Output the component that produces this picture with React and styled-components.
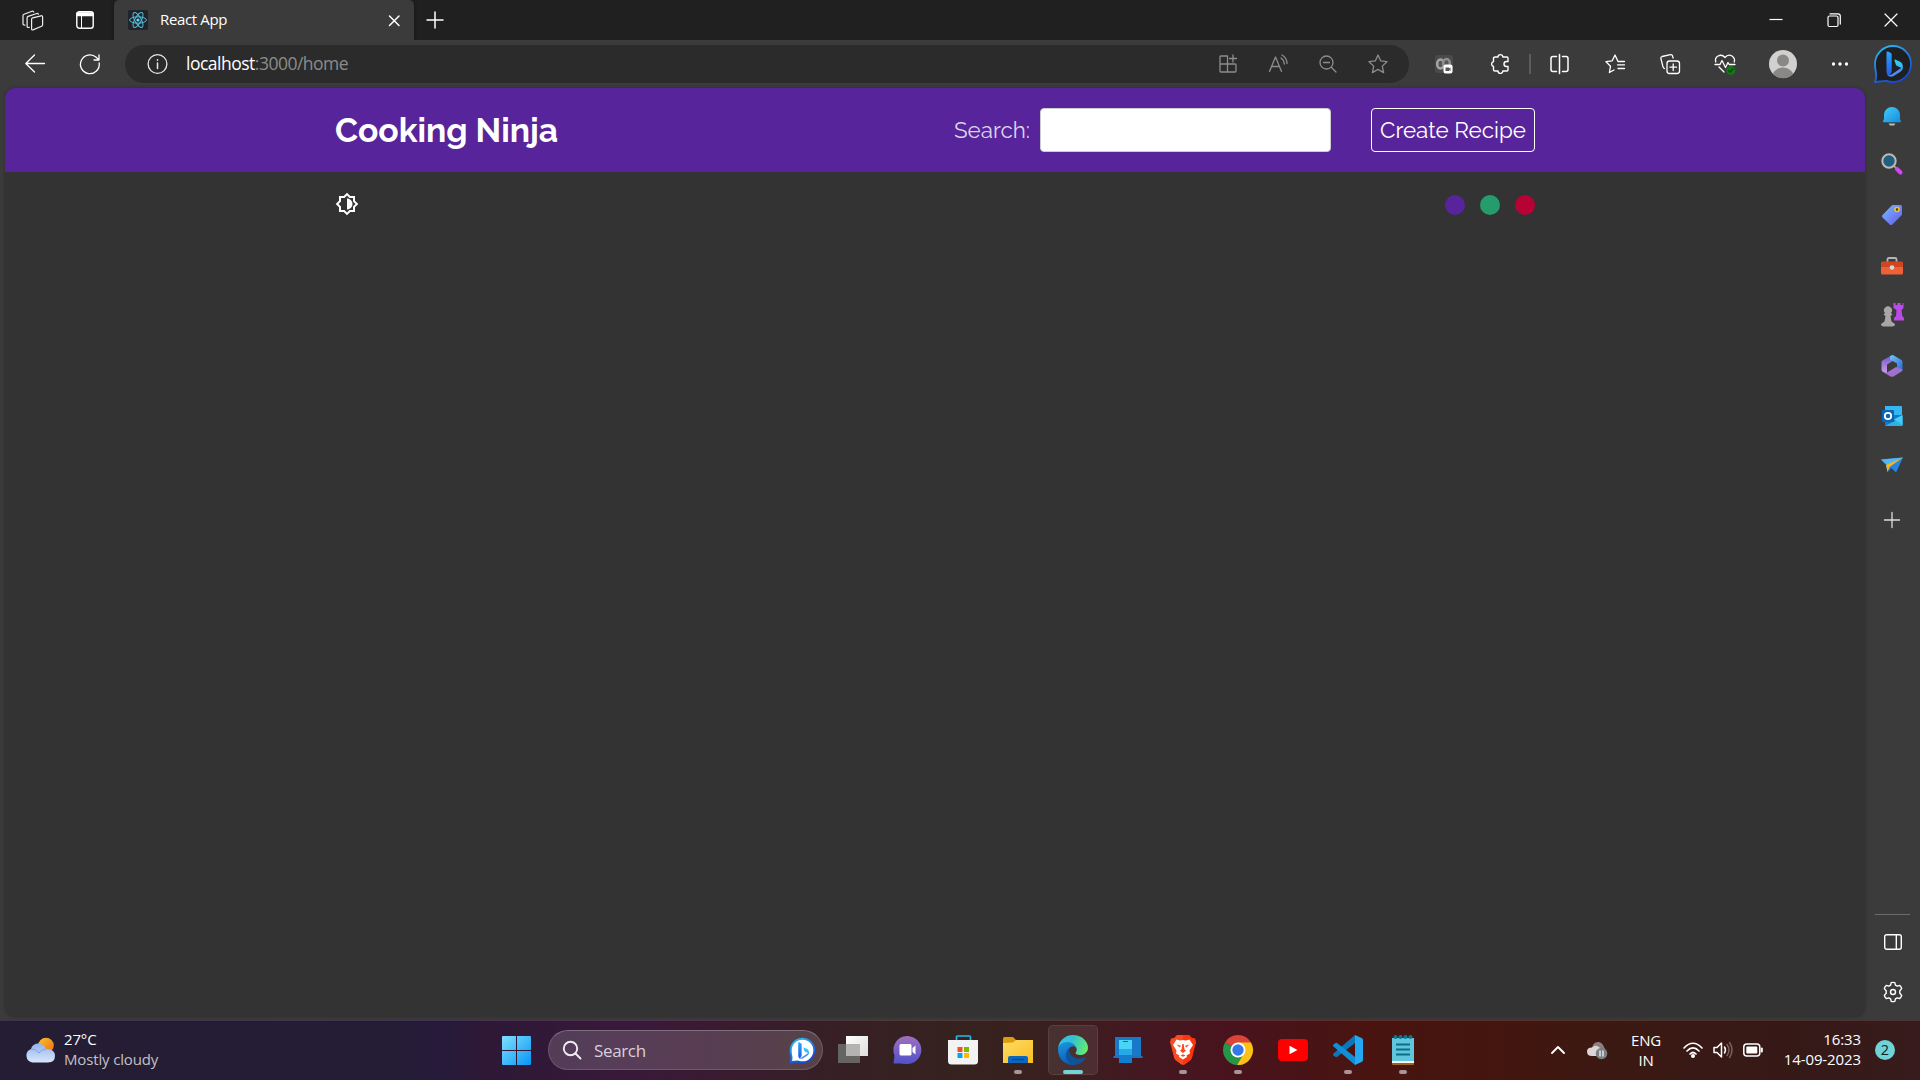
import React from 'react';
import styled, { createGlobalStyle } from 'styled-components';

const GlobalStyle = createGlobalStyle`
  * { box-sizing: border-box; }
  body { margin: 0; background: #202020; overflow: hidden; font-family: "Open Sans", "Noto Sans", sans-serif; }
  svg { display: block; flex: none; overflow: visible; }
`;

const Desktop = styled.div`
  width: 1920px;
  height: 1080px;
  display: flex;
  flex-direction: column;
`;

/* ---------- browser window ---------- */
const TabStrip = styled.div`
  height: 40px;
  display: flex;
  background: #202020;
`;
const Slot = styled.div`
  width: ${(p) => p.$w}px;
  height: ${(p) => (p.$h ? `${p.$h}px` : 'auto')};
  flex: none;
  display: flex;
  align-items: center;
  justify-content: center;
`;
const Tab = styled.div`
  width: 300px;
  margin-left: 8px;
  padding: 0 13px 0 14px;
  display: flex;
  align-items: center;
  background: #3b3b3b;
  border-radius: 5px 5px 0 0;
  box-shadow: 0 0 4px #151515;
  clip-path: inset(0 -4px 0 -4px);
  color: #fff;
`;
const TabTitle = styled.span`
  margin-left: 12px;
  padding-bottom: 3px;
  flex: 1;
  font-size: 15px;
  letter-spacing: -0.35px;
`;
const Spacer = styled.div`
  flex: 1;
`;
const Toolbar = styled.div`
  height: 48px;
  display: flex;
  align-items: center;
  background: #3b3b3b;
`;
const AddressBar = styled.div`
  width: 1284px;
  height: 38px;
  margin-left: 15px;
  padding: 0 6px 0 22px;
  display: flex;
  align-items: center;
  border-radius: 19px;
  background: #2b2b2b;
`;
const Url = styled.div`
  margin-left: 18px;
  padding-bottom: 2px;
  flex: 1;
  font-size: 17.5px;
  letter-spacing: -0.5px;
  color: #8b8b8b;
`;
const Host = styled.span`
  color: #fff;
`;
const Divider = styled.div`
  width: 2px;
  height: 20px;
  margin-left: 9px;
  background: #5c5c5c;
`;
const WindowBody = styled.div`
  height: 932px;
  display: flex;
  background: #3b3b3b;
`;
const Page = styled.div`
  width: 1860px;
  height: 929px;
  margin-left: 5px;
  border-radius: 10px;
  overflow: hidden;
  background: #333;
  box-shadow: 0 0 3px #2c2c2c;
`;
const Sidebar = styled.div`
  width: 55px;
  padding: 4px 0 3px;
  display: flex;
  flex-direction: column;
`;
const SideRule = styled.div`
  width: 35px;
  height: 1px;
  margin: 0 0 2px 10px;
  background: #6c6c6c;
`;

/* ---------- web page ---------- */
const Navbar = styled.header`
  height: 84px;
  background: #58249c;
`;
const Nav = styled.nav`
  width: 1200px;
  height: 100%;
  margin: 0 auto;
  display: flex;
  align-items: center;
  font-family: Raleway, Lato, sans-serif;
`;
const Brand = styled.h1`
  margin: 0 auto 0 0;
  font-size: 33.6px;
  font-weight: 700;
  line-height: 44px;
  color: #fff;
`;
const SearchLabel = styled.label`
  font-size: 22.4px;
  color: #dcd3e8;
`;
const SearchInput = styled.input`
  width: 291px;
  height: 44px;
  margin-left: 10px;
  border: 1px solid #ccc;
  border-radius: 4px;
  background: #fff;
`;
const CreateLink = styled.a`
  width: 164px;
  height: 44px;
  margin-left: 40px;
  display: flex;
  align-items: center;
  justify-content: center;
  border: 1px solid #fff;
  border-radius: 4px;
  font-size: 22.4px;
  white-space: nowrap;
  color: #fff;
`;
const ThemeBar = styled.div`
  width: 1200px;
  margin: 20px auto 0;
  height: 24px;
  display: flex;
  align-items: center;
  justify-content: space-between;
`;
const Swatches = styled.div`
  display: flex;
  gap: 15px;
  padding-top: 2px;
`;
const Swatch = styled.div`
  width: 20px;
  height: 20px;
  border-radius: 50%;
  background: ${(p) => p.$color};
`;

/* ---------- taskbar ---------- */
const Taskbar = styled.div`
  height: 60px;
  padding-bottom: 1px;
  display: flex;
  align-items: center;
  border-top: 1px solid #ffffff1c;
  color: #fff;
  background: linear-gradient(90deg, #251d33 0, #251c36 400px, #261a3b 445px, #2d1836 480px, #38193a 620px, #3a1a33 700px, #371f26 820px, #35221f 950px, #39201f 1050px, #441821 1140px, #49131d 1230px, #491410 1370px, #43160f 1500px, #3b1913 1620px, #351917 1800px, #381b1c 1920px);
`;
const Weather = styled.div`
  width: 502px;
  padding-left: 25px;
  display: flex;
  align-items: center;
  gap: 9px;
`;
const Lines = styled.div`
  width: ${(p) => (p.$w ? `${p.$w}px` : 'auto')};
  padding-bottom: ${(p) => p.$lift || 1}px;
  font-size: ${(p) => p.$size || 15}px;
  line-height: 20px;
  letter-spacing: ${(p) => p.$ls || 0}px;
  text-align: ${(p) => p.$align || 'left'};
  white-space: nowrap;
`;
const Muted = styled.div`
  color: #c3c0c8;
`;
const SearchBox = styled.div`
  width: 275px;
  height: 40px;
  margin: 0 3px 0 17px;
  padding: 0 7px 0 14px;
  display: flex;
  align-items: center;
  border: 1px solid #ffffff24;
  border-top-color: #ffffff40;
  border-radius: 20px;
  background: #ffffff28;
`;
const SearchText = styled.span`
  flex: 1;
  margin-left: 13px;
  font-size: 17px;
  letter-spacing: -0.35px;
  color: #d8d0d8;
`;
const AppButton = styled.div`
  width: 50px;
  height: 50px;
  margin: 0 3px 0 2px;
  display: flex;
  flex-direction: column;
  align-items: center;
  justify-content: flex-end;
  border-radius: 5px;
  border: 1px solid ${(p) => (p.$active ? '#ffffff14' : 'transparent')};
  background: ${(p) => (p.$active ? '#ffffff14' : 'transparent')};
`;
const Indicator = styled.div`
  width: ${(p) => (p.$active ? 20 : 8)}px;
  height: 4px;
  margin-top: 5px;
  border-radius: 2px;
  background: ${(p) => (p.$active ? '#70d4d8' : p.$open ? '#a79697' : 'transparent')};
`;
const Badge = styled.div`
  width: 20px;
  height: 20px;
  margin: 0 25px 0 14px;
  border-radius: 50%;
  background: #6fd3d8;
  color: #162224;
  font-size: 14.5px;
  line-height: 19px;
  text-align: center;
`;

/* ---------- icon helpers ---------- */
const Line = ({ w = 20, h = w, c = '#fff', s = 1.3, children }) => (
  <svg width={w} height={h} viewBox={`0 0 ${w} ${h}`} fill="none" stroke={c} strokeWidth={s} strokeLinecap="round" strokeLinejoin="round">
    {children}
  </svg>
);
const Art = ({ w = 30, h = w, children }) => (
  <svg width={w} height={h} viewBox={`0 0 ${w} ${h}`}>{children}</svg>
);
const Grad = ({ id, from, to, x = 1, y = 1 }) => (
  <linearGradient id={id} x1="0" y1="0" x2={x} y2={y}>
    <stop offset="0" stopColor={from} />
    <stop offset="1" stopColor={to} />
  </linearGradient>
);

/* ---------- browser icons ---------- */
const WorkspacesIcon = () => (
  <Line w={21} s={1.2} c="#eee">
    <path d="M9.600 9.200q0-1 1-1.400L19 5.800q1.600-.4 1.600 1.200v7.800q0 1-1 1.500L11 19.900q-1.400.4-1.400-1z" />
    <path d="M7.300 17.400l-1 .1q-1.200 0-1.200-1.300V7.800q0-1 1-1.400L14.800 3.500q1.200-.3 1.600.7" />
    <path d="M3 15q-2 .3-2-1.200V5.600q0-1 1-1.400L10 1.200q1.500-.3 1.700.8" />
  </Line>
);
const TabActionsIcon = () => (
  <Line w={18} s={1.4}>
    <rect x=".8" y=".8" width="16.400" height="16.400" rx="2.500" />
    <path d="M1 2h16v2.500H1z" fill="#fff" />
    <path d="M5.500 5v12" strokeWidth="1" />
  </Line>
);
const ReactIcon = () => (
  <Art w={20}>
    <rect width="20" height="20" rx="2" fill="#20232a" />
    <circle cx="10" cy="10" r="1.600" fill="#61dafb" />
    <g fill="none" stroke="#56bdda" strokeWidth="1">
      <ellipse cx="10" cy="10" rx="8.400" ry="3.200" />
      <ellipse cx="10" cy="10" rx="8.400" ry="3.200" transform="rotate(60 10 10)" />
      <ellipse cx="10" cy="10" rx="8.400" ry="3.200" transform="rotate(120 10 10)" />
    </g>
  </Art>
);
const Bing = ({ size, plate }) => (
  <svg width={size} height={size} viewBox="0 0 38 38">
    <defs>
      <linearGradient id={`ring${size}`} x1="0" y1="0" x2=".5" y2="1">
        <stop offset="0" stopColor="#25c5ea" />
        <stop offset=".5" stopColor="#2382e8" />
        <stop offset="1" stopColor="#164ad0" />
      </linearGradient>
      <Grad id={`bs${size}`} from="#28a6ff" to="#2257e6" x={0} />
      <Grad id={`bt${size}`} from="#27d3ef" to="#3fb4f3" x={0} />
    </defs>
    <path d="M1 37q1.500-4 1.200-8.500Q1 24 1 19A18 18 0 1 1 19 37q-3.500 0-6.500-1.200Q7 36.300 1 37z" fill={plate} stroke={`url(#ring${size})`} strokeWidth={size > 30 ? 1.8 : 3} strokeLinejoin="round" />
    <path d="M12.500 7.500q0-1.500 1.500-.9l2.500 1.200q1.200.6 1.200 2V27L15 31.500q-2.500-1.500-2.500-4.500z" fill={`url(#bs${size})`} />
    <path d="M13.500 30q2 .8 4-.5l9.500-6.500q1.700-1 1.800-2.500.8 4.200-2.300 6.200l-6.500 4.100q-4 2-6.500-.8z" fill="#4d8df6" />
    <path d="M20.500 15.500q-.4-1.300 1-.8l4.200 1.800q3.200 1.500 3.100 5l-.6 1.700-5-2.200q-1-.4-1.300-1.300z" fill={`url(#bt${size})`} />
  </svg>
);
const EdgeIcon = () => (
  <svg width="30" height="30" viewBox="0 0 256 256">
    <defs>
      <Grad id="edgeBlue" from="#1b9de2" to="#0d5cb6" x={0.3} />
      <linearGradient id="edgeGreen" x1="0" y1=".3" x2="1" y2=".55">
        <stop offset="0" stopColor="#35c1f1" />
        <stop offset=".45" stopColor="#34c1cf" />
        <stop offset="1" stopColor="#66eb6e" />
      </linearGradient>
    </defs>
    <path d="M231 190.500c-3.400 1.800-6.900 3.400-10.500 4.700a101.700 101.700 0 0 1-35.900 6.500c-47.300 0-88.500-32.500-88.500-74.300a31.500 31.500 0 0 1 16.400-27.300c-42.800 1.800-53.800 46.400-53.800 72.500 0 74 68.100 81.400 82.800 81.400 7.900 0 19.800-2.300 27-4.600l1.300-.4a128.300 128.300 0 0 0 66.600-52.800 4 4 0 0 0-5.400-5.700z" fill="#0f5399" />
    <path d="M105.700 241.400a79.200 79.200 0 0 1-22.700-21.300 80.700 80.700 0 0 1 29.500-120c3.200-1.500 8.500-4.100 15.600-4a32.400 32.400 0 0 1 25.700 13 31.900 31.900 0 0 1 6.300 18.700c0-.2 24.500-79.600-80-79.600-43.900 0-80 41.700-80 78.200a130.200 130.200 0 0 0 12.100 56 128 128 0 0 0 156.400 67 75.500 75.500 0 0 1-62.800-8z" fill="url(#edgeBlue)" />
    <path d="M152.300 148.900c-.8 1-3.300 2.500-3.300 5.700 0 2.600 1.700 5.100 4.700 7.200 14.400 10 41.500 8.700 41.600 8.700a59.600 59.600 0 0 0 30.200-8.300 61.400 61.400 0 0 0 30.400-52.900c.3-22.400-8-37.300-11.300-43.900C223.500 23.900 177.700 0 128 0A128 128 0 0 0 0 126.200c.5-36.500 36.800-66 80-66 3.500 0 23.500.3 42 10.100 16.300 8.600 24.900 18.900 30.800 29.200 6.200 10.700 7.300 24.100 7.300 29.500 0 5.300-2.700 13.300-7.800 19.900z" fill="url(#edgeGreen)" />
  </svg>
);

const addressIcons = [
  <Line key="apps" w={18} c="#8d8d8d">
    <path d="M1 2q0-1 1-1h6.500v16H2q-1 0-1-1zM1 9h15q1 0 1 1v6q0 1-1 1H8.500M14 0v7M10.500 3.500h7" />
  </Line>,
  <Line key="read" w={20} c="#8d8d8d">
    <path d="M1.500 17.500L7.500 3l6 14.500M3.700 12.500h7.600M13 4q3 2 3.300 6M14 1q5 3 5 8.500" />
  </Line>,
  <Line key="zoom" w={18} c="#8d8d8d">
    <circle cx="7.500" cy="7.500" r="6.500" />
    <path d="M12.300 12.300L17 17M4.500 7.500h6" />
  </Line>,
  <Line key="star" w={20} c="#8d8d8d">
    <path d="M10 1l2.700 5.900 6.300.8-4.700 4.400 1.300 6.500-5.600-3.200-5.600 3.200 1.300-6.500L1 7.700l6.300-.8z" />
  </Line>,
];

const toolbarIcons = [
  { id: 'split', w: 56, icon: <Line w={19} s={1.5}><path d="M6.500 1.500H3Q1 1.500 1 3.500v11q0 2 2 2h3.500M12.500 1.500H16q2 0 2 2v11q0 2-2 2h-3.500M9.500-.5v19" /></Line> },
  { id: 'favorites', w: 56, icon: <Line w={20}><path d="M19 7.500h-6L10 1 7.200 6.800 1 7.700l4.500 4.500-1.100 6.300L9 16M12.500 10.800H19.500M13 14.500h6.500M13.500 7.500H19.500" /></Line> },
  { id: 'collections', w: 54, icon: <Line w={20}><rect x="7" y="7" width="12.500" height="12.500" rx="2.500" /><path d="M13.200 10v6.500M10 13.200h6.500M4.500 14.500q-1.200-.5-1.500-1.700L.9 4.500Q.5 3 2 2.500L10.500.6q1.500-.3 2 1.200l.6 2.200" /></Line> },
  { id: 'essentials', w: 56, icon: (
    <Line w={20}>
      <path d="M.8 8Q-.5 4 3 2q4-2 7 1.500Q13-.2 17 2q3.500 2.500 2.200 6M0 10.500h5l2-4 3.500 7 2.500-5 1.200 2H20M4 13l5 5" />
      <circle cx="15.800" cy="16.500" r="4.400" fill="#127a12" stroke="none" />
      <path d="M13.800 16.500l1.500 1.500 2.500-3" stroke="#064406" />
    </Line>
  ) },
  { id: 'profile', w: 60, icon: <Art w={28}><circle cx="14" cy="14" r="14" fill="#d2d0ce" /><circle cx="14" cy="10.500" r="6" fill="#8a8886" /><path d="M4 24a10.200 8 0 0 1 20 0 14 14 0 0 1-20 0z" fill="#8a8886" /></Art> },
  { id: 'more', w: 54, icon: <Art w={18} h={4}><g fill="#fff"><circle cx="2.500" cy="2" r="1.700" /><circle cx="9" cy="2" r="1.700" /><circle cx="15.500" cy="2" r="1.700" /></g></Art> },
  { id: 'bing', w: 52, icon: <Bing size={38} plate="#1f1f22" /> },
];

const sidebarIcons = [
  [48, <Art key="i" w={20}><defs><Grad id="bell" from="#40cdf8" to="#168ae0" /></defs><path d="M2 9a8 8 0 0 1 16 0v4l1 2.300q.3 1-.8 1H1.800q-1 0-.8-1L2 13z" fill="url(#bell)" /><path d="M6.500 17.500h7l-1.500 2H8z" fill="#b9bdc2" /></Art>],
  [48, <Art key="i" w={22}><path d="M13 13l3 3" stroke="#999" strokeWidth="2" /><path d="M16 16l3.500 3.500" stroke="#d445f2" strokeWidth="4" strokeLinecap="round" /><circle cx="8" cy="8" r="6.700" fill="#215f80" stroke="#bcb9b6" strokeWidth="2" /></Art>],
  [54, <Art key="i" w={22}><defs><Grad id="tag" from="#78bcff" to="#6658ef" /></defs><path d="M12 1h7.500Q21 1 21 3v7q0 1-.6 1.600l-9 9q-1.400 1-2.600 0L1.500 13.500q-1-1.200 0-2.500l9-9.300Q11 1 12 1z" fill="url(#tag)" /><circle cx="16" cy="5.500" r="2" fill="#3c3a1b" stroke="#f4c714" strokeWidth="1.600" /></Art>],
  [48, <Art key="i" w={24} h={18}><path d="M7.500 5V2.500Q7.500 1 9 1h6q1.500 0 1.500 1.500V5" fill="none" stroke="#b5b5b5" strokeWidth="1.800" /><rect x="1" y="5" width="22" height="12.500" rx="1.500" fill="#ee6038" /><path d="M1 10V6q0-1.500 1.500-1.500h19Q23 4.500 23 6v4z" fill="#cf4720" /><circle cx="12" cy="10.500" r="2.300" fill="#d8d8d8" /></Art>],
  [50, <Art key="i" w={24}><path d="M13.500 0h2v2h2V0h3v2h2V0h1v5l-2 2 .8 6 1.700 2v2.500h-10V15l2-2 .5-6-3-2V0z" fill="#bb4be8" /><path d="M4 23.500q-3 0-3-2.500l3.500-2.500 1-5.500-2-1.500 1.500-1.500a4 4 0 1 1 6 0l1.500 1.500-2 1.500 1 5.500 3.500 2.500q0 2.500-3 2.500z" fill="#a8a7a6" /></Art>],
  [52, <Art key="i" w={22}><defs><Grad id="m1" from="#72c4f7" to="#2a69d0" /><Grad id="m2" from="#6a58c8" to="#d6a0e8" x={0} /></defs><path d="M11 0L1.500 5.500q-1 .7-1 2v7q0 1.300 1 2L6 19V9.500L15 4z" fill="url(#m2)" /><path d="M9 1l3-1 8.500 5q1 .7 1 2v9L16 13V8.500L9 4.500z" fill="url(#m1)" /><path d="M21.500 14.500q0 1.300-1 2L12.500 21.500q-1.500.7-3 0L2 17l4 .5 9-5.500z" fill="#a070cf" /></Art>],
  [48, <Art key="i" w={22}><path d="M4 1h16q1 0 1 1v10H4z" fill="#35b8f1" /><path d="M4 10h17.500v10q0 1-1 1H4z" fill="#117cc9" /><path d="M21.500 10v10L13 14.500z" fill="#50d0f6" /><path d="M4 21l17.500-9v8.500q0 .5-1 .5z" fill="#3cc8f2" opacity=".7" /><rect x="1" y="5" width="12" height="12" rx="1" fill="#0b64b7" /><circle cx="7" cy="11" r="3.200" fill="none" stroke="#fff" strokeWidth="1.800" /></Art>],
  [50, <Art key="i" w={22} h={16}><path d="M0 2.500L22 .5l-7 15-4.500-4.500L6.500 15 5 8z" fill="#2487e6" /><path d="M0 2.500L22 .5 6 8z" fill="#54b7f5" /><path d="M5 8L22 .5 8.500 10 6.500 15z" fill="#fcb514" /></Art>],
  [60, <Line key="i" w={16} s={1.3} c="#ddd"><path d="M8 .5v15M.5 8h15" /></Line>],
];

/* ---------- taskbar app icons ---------- */
const apps = [
  { icon: <Art><defs><Grad id="tv" from="#fff" to="#ddd" /></defs><path d="M0 9h22v19H0z" fill="#666463" /><path d="M8 1h22v20H8z" fill="url(#tv)" /><path d="M8 9h14v12H8z" fill="#b5b3b2" /></Art> },
  { icon: <Art><defs><Grad id="cb" from="#a16fbd" to="#4f52ca" x={0} /></defs><path d="M.5 28.500l1-8A14 14 0 1 1 15 29q-5 0-7-.5z" fill="url(#cb)" /><rect x="6.500" y="9" width="12" height="11.500" rx="1.500" fill="#fff" /><path d="M19.500 13l3-2.500v9l-3-2.500z" fill="#fff" /></Art> },
  { icon: <Art><path d="M8.500 7V2q0-1 1-1h12q1 0 1 1v5" fill="none" stroke="#24b8ee" strokeWidth="1.700" /><path d="M0 5h30v21q0 3.500-3.500 3.500h-23Q0 29.500 0 26z" fill="#f3f3f3" /><path d="M9.500 12h5v5h-5z" fill="#f25022" /><path d="M16 12h5v5h-5z" fill="#7fba00" /><path d="M9.500 18h5v5h-5z" fill="#00a4ef" /><path d="M16 18h5v5h-5z" fill="#ffb900" /></Art> },
  { open: 1, icon: <Art><defs><Grad id="fo" from="#ffdc66" to="#f9bd20" /></defs><path d="M0 3.500Q0 2 1.500 2H10l3 3v5H0z" fill="#dc9c0b" /><path d="M0 8l10-.5L13 5h17v23H0z" fill="url(#fo)" /><path d="M5 28v-5q0-2 2-2h16q2 0 2 2v5z" fill="#0c68be" /><path d="M9 24.500h12" stroke="#074a90" strokeWidth="1.500" /></Art> },
  { active: 1, icon: <EdgeIcon /> },
  { icon: <Art><path d="M2 2h26v19h1.500v2H.5v-2H2z" fill="#1b72bd" /><path d="M2 2h26v19H2z" fill="#1979c8" /><path d="M6 5h13v23H6z" fill="#26a9e8" /><path d="M6 5h13v9H6z" fill="#48d5f5" /><path d="M6 20h13v8H6z" fill="#147dcd" /><path d="M10 6.500h5" stroke="#1067a4" /></Art> },
  { open: 1, icon: <Art><path d="M9 0h12l3 3 3 .5 1 4-1 3-3 12q-.5 2-2 3l-5 3.800q-2 1-4 0L8 25.500q-1.500-1-2-3l-3-12-1-3 1-4L6 3z" fill="#fb4920" /><path d="M15 0h6l3 3 3 .5 1 4-1 3-3 12q-.5 2-2 3l-7 4.500z" fill="#ff2600" opacity=".6" /><path d="M8.500 4.500l3.500 1 3-.5 3 .5 3.500-1 3.500 5.500-3.500 5.500.5 3-3.500 2 .5 1.500-4 2.500-4-2.500.5-1.500-3.500-2 .5-3L5 10z" fill="#fff" /><path d="M8.500 9.500l4.500 1.200-1.300 1.800zM21.500 9.500l-4.500 1.200 1.300 1.800zM14.300 9h1.400l.8 5.500 1.500 1.300-3 2.200-3-2.200 1.500-1.300zM12.500 20.500l2.500-1.300 2.500 1.300-2.500 1.300z" fill="#fb4920" /></Art> },
  { open: 1, icon: <Art><path d="M15 15L2 7.500A15 15 0 0 1 28 7.500z" fill="#db4437" /><path d="M15 15L2 7.500A15 15 0 0 0 14 30l7-12z" fill="#269548" /><path d="M15 15V7.500h13A15 15 0 0 1 14 30l7-12z" fill="#fbc116" /><circle cx="15" cy="15" r="7.500" fill="#fff" /><circle cx="15" cy="15" r="5.700" fill="#3379eb" /></Art> },
  { icon: <Art><rect y="4" width="30" height="22" rx="4" fill="#f00" /><path d="M11.500 10.800v8.400l8-4.200z" fill="#fff" /></Art> },
  { open: 1, icon: <Art><path d="M22 0v8L4 22q-.7.500-1.500 0L.5 20.500q-1-1 0-2z" fill="#0877bc" /><path d="M22 30v-8L4 8q-.7-.5-1.500 0L.5 9.500q-1 1 0 2z" fill="#118fd6" /><path d="M22 0l6.500 3q1.500.6 1.500 2v20q0 1.400-1.500 2L22 30z" fill="#25a8f2" /></Art> },
  { open: 1, icon: <Art><path d="M4 25h22v4q0 1-1 1H5q-1 0-1-1z" fill="#a2601d" /><path d="M4 3h22v24H4z" fill="#61c5db" /><path d="M4 26h22v2H4z" fill="#f4f4f4" /><path d="M8 9.500h14M8 14.500h14M8 19.500h14" stroke="#09708c" strokeWidth="2" /><g fill="#0a7893"><circle cx="7.500" cy="2" r="2" /><circle cx="12.500" cy="2" r="2" /><circle cx="17.500" cy="2" r="2" /><circle cx="22.500" cy="2" r="2" /></g></Art> },
];

const swatchColors = ['#58249c', '#249c6b', '#b70233'];

const gearPath = 'M8.200.6q1.800-.4 3.600 0l.6 2.600 1.800 1 2.600-.8q1.300 1.300 1.900 3.200L16.800 8.700v2.600l1.900 2.100q-.6 1.900-1.900 3.200l-2.600-.8-1.800 1-.6 2.600q-1.800.4-3.600 0l-.6-2.600-1.800-1-2.600.8Q1.900 15.300 1.300 13.400l1.900-2.100V8.700L1.300 6.600Q1.900 4.700 3.200 3.400l2.600.8 1.800-1z';

export default function App() {
  return (
    <Desktop>
      <GlobalStyle />
      <TabStrip>
        <Slot $w={64}><WorkspacesIcon /></Slot>
        <Slot $w={42}><TabActionsIcon /></Slot>
        <Tab>
          <ReactIcon />
          <TabTitle>React App</TabTitle>
          <Line w={14} s={1.5}><path d="M2.500 3l9.500 9.500M12 3l-9.500 9.500" /></Line>
        </Tab>
        <Slot $w={42}><Line w={18} s={1.5}><path d="M9 1v16M1 9h16" /></Line></Slot>
        <Spacer />
        <Slot $w={58}><Line w={14} h={2} s={1.2}><path d="M.5 .5h13" strokeLinecap="butt" /></Line></Slot>
        <Slot $w={57}><Line w={14} s={1.2}><rect x="1" y="3" width="10" height="10.500" rx="1.500" /><path d="M3 .8h8q2.300 0 2.300 2.300v8" /></Line></Slot>
        <Slot $w={58}><Line w={14} s={1.2}><path d="M1 1l12 12M13 1L1 13" /></Line></Slot>
      </TabStrip>

      <Toolbar>
        <Slot $w={70}><Line w={20}><path d="M19.500 9.500H.8M9.500 1L.8 9.500l8.700 8.500" /></Line></Slot>
        <Slot $w={40}><Line w={20}><path d="M19.200 9a9.400 9.400 0 1 1-3-5.700L19 6M19 .8V6h-5" /></Line></Slot>
        <AddressBar>
          <Line w={21} h={20} c="#e8e8e8"><circle cx="10.500" cy="10" r="9.400" /><path d="M10.500 9v5.500M10.500 5.800v.4" strokeWidth="1.500" /></Line>
          <Url><Host>localhost</Host>:3000/home</Url>
          {addressIcons.map((icon) => <Slot key={icon.key} $w={50}>{icon}</Slot>)}
        </AddressBar>
        <Slot $w={70}>
          <Art w={18}>
            <rect width="18" height="18" rx="3" fill="#4a4a4a" />
            <ellipse cx="5.500" cy="9" rx="3.300" ry="4.500" fill="#555" stroke="#a5a5a5" strokeWidth="2.500" />
            <ellipse cx="11.500" cy="8.500" rx="3.300" ry="4.500" fill="#555" stroke="#8f8f8f" strokeWidth="2.500" />
            <rect x="8.500" y="9.500" width="9" height="9" rx="2" fill="#fff" />
            <path d="M10.500 12.500h3.500v1l1.500-1v3.500l-1.500-1v1h-3.500z" fill="#555" />
          </Art>
        </Slot>
        <Slot $w={41}>
          <Line w={20} s={1.4}>
            <path d="M5 3h3a2.400 2.400 0 0 1 4.800 0H17q1 0 1 1v3.500h-1.500a2.500 2.500 0 0 0 0 5H18V16q0 1-1 1h-4.200a2.400 2.400 0 0 1-4.800 0H5q-1.500 0-1.500-1v-3.500a2.600 2.600 0 0 1 0-5V4q0-1 1.500-1z" />
          </Line>
        </Slot>
        <Divider />
        {toolbarIcons.map(({ id, w, icon }) => <Slot key={id} $w={w}>{icon}</Slot>)}
      </Toolbar>

      <WindowBody>
        <Page>
          <Navbar>
            <Nav>
              <Brand>Cooking Ninja</Brand>
              <SearchLabel htmlFor="search">Search:</SearchLabel>
              <SearchInput id="search" type="text" />
              <CreateLink>Create Recipe</CreateLink>
            </Nav>
          </Navbar>
          <ThemeBar>
            <svg width="24" height="24" viewBox="0 0 24 24" fill="#fff">
              <path d="M20 8.690V4h-4.690L12 .69 8.690 4H4v4.690L.69 12 4 15.310V20h4.690L12 23.310 15.310 20H20v-4.690L23.310 12 20 8.690zm-2 5.790V18h-3.520L12 20.480 9.520 18H6v-3.520L3.520 12 6 9.520V6h3.520L12 3.520 14.480 6H18v3.520L20.480 12 18 14.480zM12 6.500v11c3.030 0 5.500-2.470 5.500-5.500S15.030 6.500 12 6.500z" />
            </svg>
            <Swatches>
              {swatchColors.map((color) => <Swatch key={color} $color={color} />)}
            </Swatches>
          </ThemeBar>
        </Page>
        <Sidebar>
          {sidebarIcons.map(([h, icon], i) => <Slot key={i} $w={54} $h={h}>{icon}</Slot>)}
          <Spacer />
          <SideRule />
          <Slot $w={55} $h={50}><Line w={18} h={16} s={1.4}><rect x=".7" y=".7" width="16.600" height="14.600" rx="2" /><path d="M12.300 1v14" /></Line></Slot>
          <Slot $w={55} $h={50}><Line w={20} s={1.4}><path d={gearPath} /><circle cx="10" cy="10" r="2.500" /></Line></Slot>
        </Sidebar>
      </WindowBody>

      <Taskbar>
        <Weather>
          <Art w={30} h={26}>
            <defs><Grad id="sun" from="#f9c22f" to="#ee6d12" /><Grad id="cl" from="#91b4ee" to="#d9e6fb" x={0} /></defs>
            <circle cx="21" cy="8.500" r="7.800" fill="url(#sun)" />
            <path d="M7.500 25.500a7 7 0 0 1-1.500-13.500Q7.500 6.500 13.500 6.500q5 0 7.500 5.500 9 0 9 6.800 0 6.700-7 6.700z" fill="url(#cl)" />
            <path d="M6 12q5-.5 8 4 1.500-3.500 7-4" fill="none" stroke="#7da3e2" strokeWidth="1" />
          </Art>
          <Lines $ls={-0.15} $lift={3}>
            <div>27°C</div>
            <Muted>Mostly cloudy</Muted>
          </Lines>
        </Weather>
        <Art w={29}>
          <defs><linearGradient id="win" gradientUnits="userSpaceOnUse" x1="0" y1="0" x2="29" y2="29"><stop offset="0" stopColor="#7fe0ff" /><stop offset="1" stopColor="#0795f5" /></linearGradient></defs>
          <path d="M0 1q0-1 1-1h13v14H0zM15 0h13q1 0 1 1v13H15zM0 15h14v14H1q-1 0-1-1zM15 15h14v13q0 1-1 1H15z" fill="url(#win)" />
        </Art>
        <SearchBox>
          <Line w={18} c="#f0ecf0" s={1.9}><circle cx="7.500" cy="7.500" r="6.700" /><path d="M12.500 12.500l5 5" /></Line>
          <SearchText>Search</SearchText>
          <Bing size={25} plate="#fff" />
        </SearchBox>
        {apps.map((app, i) => (
          <AppButton key={i} $active={app.active}>
            {app.icon}
            <Indicator $active={app.active} $open={app.open} />
          </AppButton>
        ))}
        <Spacer />
        <Slot $w={40}><Line w={14} h={8} s={1.9}><path d="M1 7l6-6 6 6" /></Line></Slot>
        <Slot $w={40}>
          <Art w={22} h={20}>
            <path d="M5 8q1-6 6-6 4 0 6 5l2 4H5z" fill="#8f8080" />
            <path d="M5 16q-5 0-5-4.500 0-4 5-4Q9 4 13 8l3 3-3 5z" fill="#ddd5d5" />
            <circle cx="14.500" cy="13.500" r="5.800" fill="#788084" />
            <path d="M13 10.500v6M16 10.500v6" stroke="#fff" strokeWidth="1.200" />
          </Art>
        </Slot>
        <Lines $w={56} $align="center" $ls={-0.2}><div>ENG</div><div>IN</div></Lines>
        <Slot $w={38}>
          <Line w={20} h={16} s={1.7}><path d="M1 6q9-9.500 18 0M4 9q6-6 12 0M7 12q3-3 6 0" /><circle cx="10" cy="14" r="1.200" fill="#fff" /></Line>
        </Slot>
        <Slot $w={22}>
          <Line w={20} h={16} s={1.5}><path d="M1 5.500h3L8.500 1v14L4 10.500H1zM11.500 5q2 3 0 6" /><path d="M14 2.500q4 5.500 0 11M16.500 .5q5 7.500 0 15" stroke="#7a6260" /></Line>
        </Slot>
        <Slot $w={38}>
          <Line w={20} h={14} s={1.5}><rect x=".8" y="1" width="16" height="12" rx="3" /><rect x="3.300" y="3.500" width="11" height="7" rx="1" fill="#fff" stroke="none" /><path d="M18.800 5.500v3" strokeWidth="2" /></Line>
        </Slot>
        <Lines $w={89} $align="right" $ls={-0.1} $lift={3}><div>16:33</div><div>14-09-2023</div></Lines>
        <Badge>2</Badge>
      </Taskbar>
    </Desktop>
  );
}
